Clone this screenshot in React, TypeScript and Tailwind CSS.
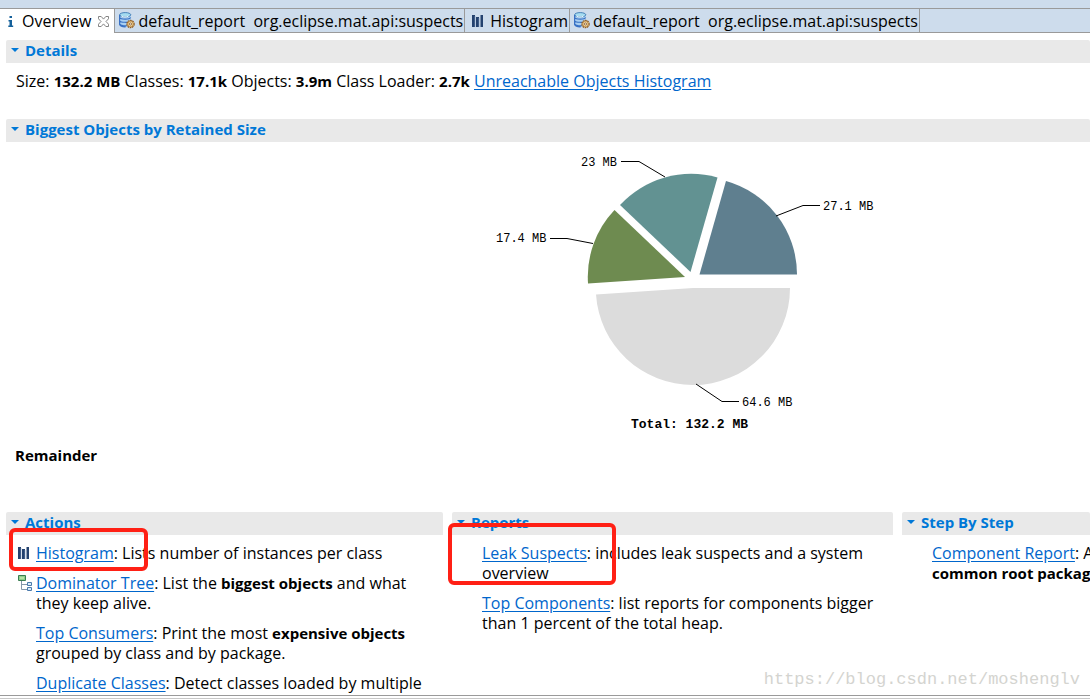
import type { ReactNode } from "react";

function DatabaseIcon() {
  return (
    <svg width="16" height="17" viewBox="0 0 16 17" className="shrink-0" aria-hidden="true">
      <path d="M.5 3v9.5c0 1.300 2.500 2.500 5.500 2.500s5.800-1.200 5.800-2.500V3z" fill="#a9d0f2" />
      <ellipse cx="6.200" cy="2.800" rx="5.600" ry="2.200" fill="#a5dcf0" stroke="#4681b8" />
      <path d="M.6 5.500c1 2 10 2.200 11.100 0M.6 8.700c1 2 10 2.200 11.100 0M.6 11.800c1 2 5 2.200 7 1.800M.6 3v9.600c1 2 4 2.400 6 2.300" fill="none" stroke="#3971c4" strokeWidth="1.200" />
      <path d="M2.500 4.200c2 1.200 5 1.200 7 0" stroke="#f0fbff" fill="none" />
      <circle cx="11.500" cy="12" r="3.600" fill="#f8dda0" stroke="#8c5a26" strokeWidth="1.300" strokeDasharray="1.700 .6" />
      <circle cx="11.500" cy="12" r="2.700" fill="#f9dfa4" stroke="#a87532" strokeWidth=".7" />
      <circle cx="11.500" cy="12" r="1.100" fill="#fff" stroke="#7d5127" strokeWidth=".8" />
    </svg>
  );
}

function BarsIcon() {
  return (
    <svg width="12" height="12" viewBox="0 0 12 12" className="shrink-0" aria-hidden="true">
      <path d="M0 0h3v12H0zM4 2h3v10H4zM8.500 0h2.500v12H8.500z" fill="#24426f" />
      <path d="M3 1v11M7 3v9" stroke="#7f9bc0" strokeWidth=".6" />
    </svg>
  );
}

function TreeIcon() {
  return (
    <svg width="14" height="16" viewBox="0 0 14 16" className="shrink-0" aria-hidden="true">
      <path d="M3.500 6v8.500H9M3.500 9.500H9" fill="none" stroke="#8497ab" />
      <path d="M.5.5h7v5h-7z" fill="#8fce8c" stroke="#3a7d52" />
      <path d="M2 2h4v2H2z" fill="#b6e3a6" />
      <path d="M9.500 7.500h4v3h-4zM9.500 12.500h4v3h-4z" fill="#d7ebfa" stroke="#4b79ab" />
    </svg>
  );
}

function InfoIcon() {
  return (
    <svg width="6" height="11" viewBox="0 0 6 11" className="shrink-0" aria-hidden="true">
      <path d="M1.500 0h2.500v2H1.500zM.5 4H4v5.500h1.200V11H.3V9.500h1.200v-4H.5z" fill="#15619b" />
    </svg>
  );
}

function CloseIcon() {
  return (
    <svg width="11" height="11" viewBox="0 0 11 11" aria-hidden="true">
      <path d="M.5.5h2.700l2.300 2.600L7.800.5h2.700v2.300L8 5.500l2.500 2.700v2.300H7.800L5.500 7.900l-2.300 2.600H.5V8.200L3 5.500.5 2.800z" fill="#fff" stroke="#777" strokeWidth=".9" />
    </svg>
  );
}

function Tab({ icon, children }: { icon: ReactNode; children: ReactNode }) {
  return (
    <button className="flex items-center gap-[3px] whitespace-pre border-r border-b border-[#9a9a9a] pl-1 pr-px">
      {icon}
      {children}
    </button>
  );
}

function SectionHeader({ children }: { children: ReactNode }) {
  return (
    <h2 className="flex h-[23px] items-center gap-[6px] rounded-t-xs bg-[#e9e9e9] pb-[3px] pl-[5px] text-[15px] font-bold leading-5 text-[#0078d7]">
      <svg width="8" height="4" viewBox="0 0 8 4" aria-hidden="true">
        <path d="M0 0h8L4 4z" fill="#0078d7" />
      </svg>
      {children}
    </h2>
  );
}

function Link({ children }: { children: ReactNode }) {
  return (
    <a href="#" className="text-[#0066cc] underline underline-offset-2">
      {children}
    </a>
  );
}

function Strong({ children }: { children: ReactNode }) {
  return <b className="text-[15px]">{children}</b>;
}

function Item({ icon, children }: { icon?: ReactNode; children: ReactNode }) {
  return (
    <li className="flex">
      <span className="flex h-5 w-[18px] shrink-0 items-center">{icon}</span>
      <p className="whitespace-nowrap">{children}</p>
    </li>
  );
}

function PieChart() {
  return (
    <svg width="400" height="290" viewBox="0 0 400 290" role="img" aria-label="Biggest objects by retained size">
      <path d="M219.500 129.500L246 36A97 97 0 0 1 317 129.500z" fill="#5f7f8f" />
      <path d="M210.500 127L237.500 32.500A97 97 0 0 0 140 60z" fill="#629292" />
      <path d="M205 132L134.500 65A97 97 0 0 0 108 138.500z" fill="#6e8b50" />
      <path d="M213 143H310A97 97 0 0 1 213 240A97 97 0 0 1 116 149.500z" fill="#dcdcdc" />
      <path
        d="M141 16.500h18L185 32M340 60.500h-17L296 71M70 93.500h17L113 98.500M216 239l26 17.500h17"
        fill="none"
        stroke="#000"
      />
      <g className="font-['Liberation_Mono',monospace] text-[12px]">
        <text x="101" y="21">23 MB</text>
        <text x="343" y="65">27.1 MB</text>
        <text x="16" y="97">17.4 MB</text>
        <text x="262" y="261">64.6 MB</text>
        <text x="151" y="283" className="text-[13px] font-bold">Total: 132.2 MB</text>
      </g>
    </svg>
  );
}

export default function App() {
  return (
    <div className="relative flex min-h-screen flex-col overflow-hidden bg-white font-['Open_Sans','Noto_Sans',sans-serif] text-[16px] leading-5 text-black">
      <nav className="flex h-[33px] shrink-0 bg-[#cddcec] pt-2">
        <div className="flex flex-1 border-t border-[#9a9a9a]">
          <div className="flex items-center gap-[7px] border-r border-[#9a9a9a] bg-white pl-2 pr-[5px]">
            <button className="flex items-center gap-2">
              <InfoIcon />
              Overview
            </button>
            <button aria-label="Close">
              <CloseIcon />
            </button>
          </div>
          <Tab icon={<DatabaseIcon />}>{"default_report  org.eclipse.mat.api:suspects"}</Tab>
          <Tab icon={<span className="px-[3px]"><BarsIcon /></span>}>Histogram</Tab>
          <Tab icon={<DatabaseIcon />}>{"default_report  org.eclipse.mat.api:suspects"}</Tab>
          <div className="flex-1 border-b border-[#9a9a9a]" />
        </div>
      </nav>

      <main className="flex flex-1 flex-col pl-[6px] pt-[7px]">
        <section>
          <SectionHeader>Details</SectionHeader>
          <p className="pb-7 pl-[10px] pt-2">
            Size: <Strong>132.2 MB</Strong> Classes: <Strong>17.1k</Strong> Objects: <Strong>3.9m</Strong> Class Loader:{" "}
            <Strong>2.7k</Strong> <Link>Unreachable Objects Histogram</Link>
          </p>
        </section>

        <section>
          <SectionHeader>Biggest Objects by Retained Size</SectionHeader>
          <div className="flex justify-start pl-[474px] pt-[3px]">
            <PieChart />
          </div>
          <p className="pb-[47px] pl-[9px] pt-[10px] text-[15px] font-bold">Remainder</p>
        </section>

        <div className="grid grid-cols-[437fr_441fr_188fr] gap-[9px]">
          <section className="min-w-0">
            <SectionHeader>Actions</SectionHeader>
            <ul className="flex flex-col gap-[10px] pl-3 pt-2">
              <Item icon={<BarsIcon />}>
                <Link>Histogram</Link>: Lists number of instances per class
              </Item>
              <Item icon={<TreeIcon />}>
                <Link>Dominator Tree</Link>: List the <Strong>biggest objects</Strong> and what
                <br />
                they keep alive.
              </Item>
              <Item>
                <Link>Top Consumers</Link>: Print the most <Strong>expensive objects</Strong>
                <br />
                grouped by class and by package.
              </Item>
              <Item>
                <Link>Duplicate Classes</Link>: Detect classes loaded by multiple
              </Item>
            </ul>
          </section>
          <section className="min-w-0">
            <SectionHeader>Reports</SectionHeader>
            <ul className="flex flex-col gap-[10px] pl-3 pt-2">
              <Item>
                <Link>Leak Suspects</Link>: includes leak suspects and a system
                <br />
                overview
              </Item>
              <Item>
                <Link>Top Components</Link>: list reports for components bigger
                <br />
                than 1 percent of the total heap.
              </Item>
            </ul>
          </section>
          <section className="min-w-0 overflow-hidden">
            <SectionHeader>Step By Step</SectionHeader>
            <ul className="pl-3 pt-2">
              <Item>
                <Link>Component Report</Link>: A
                <br />
                <Strong>common root package</Strong>
              </Item>
            </ul>
          </section>
        </div>
      </main>

      <footer className="h-1 shrink-0 border-y border-t-[#9a9a9a] border-b-[#c8c8c8]" />

      <div className="pointer-events-none absolute left-[9px] top-[528px] h-[43px] w-[139px] rounded-md border-4 border-[#ff2015]" />
      <div className="pointer-events-none absolute left-[448px] top-[523px] h-[62px] w-[168px] rounded-md border-4 border-[#ff2015]" />
      <span className="pointer-events-none absolute bottom-[9px] right-[10px] font-['Liberation_Mono',monospace] text-[17px] text-[#d4d4d0]">
        https://blog.csdn.net/moshenglv
      </span>
    </div>
  );
}
